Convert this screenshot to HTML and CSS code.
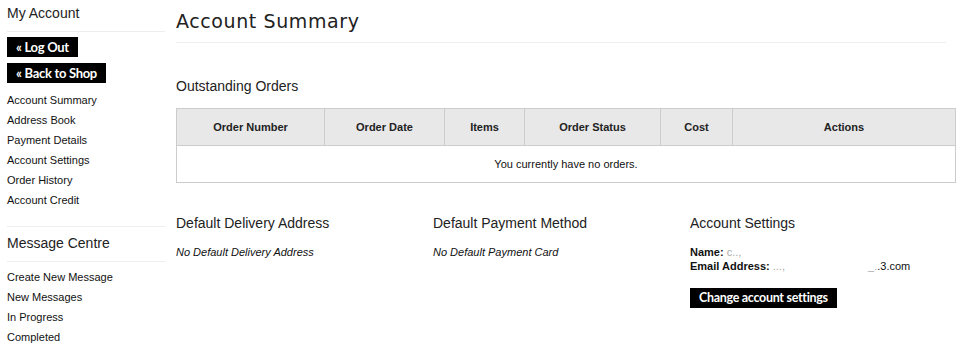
FILE: index.html
```html
<!DOCTYPE html>
<html>
<head>
    <title>My Account</title>
    <link rel="stylesheet" href="styles.css">
</head>
<body>
    <div class="page">
        <aside class="sidebar">
            <h2 class="side-title">My Account</h2>
            <div class="side-buttons">
                <a class="btn" href="#">&laquo; Log Out</a>
                <a class="btn" href="#">&laquo; Back to Shop</a>
            </div>
            <ul class="side-links">
                <li><a href="#">Account Summary</a></li>
                <li><a href="#">Address Book</a></li>
                <li><a href="#">Payment Details</a></li>
                <li><a href="#">Account Settings</a></li>
                <li><a href="#">Order History</a></li>
                <li><a href="#">Account Credit</a></li>
            </ul>
            <h2 class="side-title second">Message Centre</h2>
            <ul class="side-links">
                <li><a href="#">Create New Message</a></li>
                <li><a href="#">New Messages</a></li>
                <li><a href="#">In Progress</a></li>
                <li><a href="#">Completed</a></li>
            </ul>
        </aside>

        <main class="content">
            <h1>Account Summary</h1>

            <h3 class="section-title">Outstanding Orders</h3>
            <table class="orders">
                <thead>
                    <tr>
                        <th class="c-num">Order Number</th>
                        <th class="c-date">Order Date</th>
                        <th class="c-items">Items</th>
                        <th class="c-status">Order Status</th>
                        <th class="c-cost">Cost</th>
                        <th>Actions</th>
                    </tr>
                </thead>
                <tbody>
                    <tr>
                        <td colspan="6">You currently have no orders.</td>
                    </tr>
                </tbody>
            </table>

            <div class="summary-cols">
                <div class="col">
                    <h3 class="col-title">Default Delivery Address</h3>
                    <p class="empty">No Default Delivery Address</p>
                </div>
                <div class="col">
                    <h3 class="col-title">Default Payment Method</h3>
                    <p class="empty">No Default Payment Card</p>
                </div>
                <div class="col">
                    <h3 class="col-title">Account Settings</h3>
                    <p class="details">
                        <b>Name:</b> <span class="hidden-data">c..,</span><br>
                        <b>Email Address:</b> <span class="hidden-data">..., </span><span class="gap"></span><span class="hidden-data">_.</span>.3.com
                    </p>
                    <a class="btn wide" href="#">Change account settings</a>
                </div>
            </div>
        </main>
    </div>
</body>
</html>
```

FILE: styles.css
```css
* {
    margin: 0;
    padding: 0;
    box-sizing: border-box;
}

body {
    background: #fff;
    color: #111;
    font-family: 'Liberation Sans', Arial, sans-serif;
    font-size: 11px;
}

a {
    color: inherit;
    text-decoration: none;
}

.page {
    display: flex;
    align-items: flex-start;
}

/* sidebar */

.sidebar {
    width: 158px;
    margin-left: 7px;
}

.side-title {
    font-weight: normal;
    font-size: 14px;
    line-height: 16px;
    padding: 5px 0 10px;
    border-bottom: 1px solid #eee;
    color: #222;
}

.side-title.second {
    padding-top: 8px;
    padding-bottom: 10px;
    border-top: 1px solid #eee;
    margin-top: 16px;
}

.side-buttons {
    display: flex;
    flex-direction: column;
    align-items: flex-start;
    gap: 6px;
    margin-top: 5px;
}

.btn {
    display: inline-block;
    background: #000;
    color: #fff;
    font-family: Lato, 'Open Sans', sans-serif;
    font-weight: bold;
    font-size: 13px;
    line-height: 20px;
    height: 20px;
    padding: 0 9px;
    letter-spacing: -0.3px;
}

.side-links {
    list-style: none;
    margin-top: 7px;
}

.side-title.second + .side-links {
    margin-top: 5px;
}

.side-links li {
    line-height: 20px;
}

/* main */

.content {
    width: 780px;
    margin-left: 11px;
}

h1 {
    font-family: 'DejaVu Sans', sans-serif;
    font-weight: normal;
    font-size: 19px;
    line-height: 24px;
    letter-spacing: 0.6px;
    padding: 9px 0 9px;
    border-bottom: 1px solid #eee;
    margin-right: 10px;
    color: #222;
}

.section-title {
    font-weight: normal;
    font-size: 14px;
    line-height: 16px;
    margin-top: 35px;
    color: #222;
}

.orders {
    width: 780px;
    margin-top: 14px;
    border-collapse: collapse;
    border: 1px solid #ccc;
}

.orders th {
    background: #e8e8e8;
    border: 1px solid #ccc;
    height: 37px;
    font-size: 11px;
    color: #222;
}

.orders td {
    height: 37px;
    text-align: center;
    border: 1px solid #ccc;
}

.c-num { width: 148px; }
.c-date { width: 120px; }
.c-items { width: 80px; }
.c-status { width: 136px; }
.c-cost { width: 72px; }

.summary-cols {
    display: grid;
    grid-template-columns: 257px 257px 257px;
    margin-top: 32px;
}

.col-title {
    font-weight: normal;
    font-size: 14px;
    line-height: 16px;
    color: #222;
}

.empty {
    font-style: italic;
    line-height: 14px;
    margin-top: 14px;
}

.details {
    line-height: 14px;
    margin-top: 14px;
}

.hidden-data {
    color: #aaa;
}

.gap {
    display: inline-block;
    width: 80px;
}

.btn.wide {
    margin-top: 15px;
    font-size: 12.5px;
}
```
